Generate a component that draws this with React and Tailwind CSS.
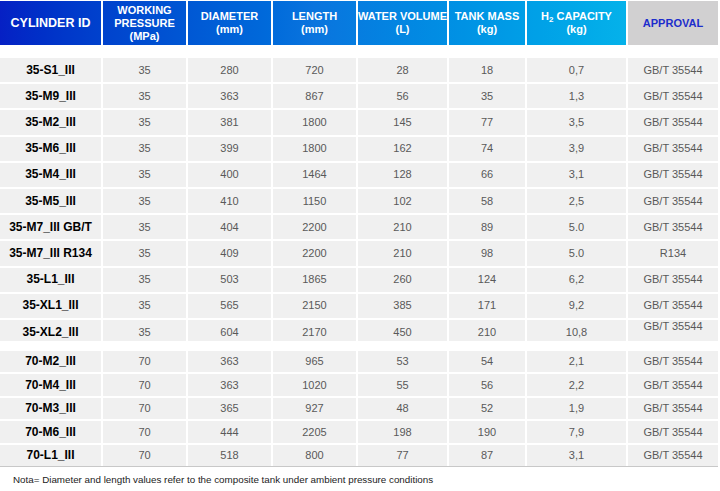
import React from 'react';

const cols = 'grid grid-cols-[103px_85px_85px_85px_91px_78px_101px_92px]';

const group35 = [
  ['35-S1_III', '35', '280', '720', '28', '18', '0,7', 'GB/T 35544'],
  ['35-M9_III', '35', '363', '867', '56', '35', '1,3', 'GB/T 35544'],
  ['35-M2_III', '35', '381', '1800', '145', '77', '3,5', 'GB/T 35544'],
  ['35-M6_III', '35', '399', '1800', '162', '74', '3,9', 'GB/T 35544'],
  ['35-M4_III', '35', '400', '1464', '128', '66', '3,1', 'GB/T 35544'],
  ['35-M5_III', '35', '410', '1150', '102', '58', '2,5', 'GB/T 35544'],
  ['35-M7_III GB/T', '35', '404', '2200', '210', '89', '5.0', 'GB/T 35544'],
  ['35-M7_III R134', '35', '409', '2200', '210', '98', '5.0', 'R134'],
  ['35-L1_III', '35', '503', '1865', '260', '124', '6,2', 'GB/T 35544'],
  ['35-XL1_III', '35', '565', '2150', '385', '171', '9,2', 'GB/T 35544'],
];

const group70 = [
  ['70-M2_III', '70', '363', '965', '53', '54', '2,1', 'GB/T 35544'],
  ['70-M4_III', '70', '363', '1020', '55', '56', '2,2', 'GB/T 35544'],
  ['70-M3_III', '70', '365', '927', '48', '52', '1,9', 'GB/T 35544'],
  ['70-M6_III', '70', '444', '2205', '198', '190', '7,9', 'GB/T 35544'],
  ['70-L1_III', '70', '518', '800', '77', '87', '3,1', 'GB/T 35544'],
];

function Row({ data, height }) {
  return (
    <div className={`${cols} ${height} border-b-2 border-white`}>
      {data.map((v, i) => (
        <div
          key={i}
          className={`flex items-center justify-center bg-[#f0f0f0] border-r-2 border-white leading-[13px] ${
            i === 0 ? 'text-[12px] font-bold text-black' : 'text-[11px] text-[#595959]'
          }`}
        >
          {v}
        </div>
      ))}
    </div>
  );
}

export default function App() {
  return (
    <div className="w-[720px] h-[491px] bg-white font-['Liberation_Sans',Arial,sans-serif] overflow-hidden">
      {/* header */}
      <div className={`${cols} h-[45px] pt-[1px]`}>
        <div className="col-span-7 grid grid-cols-[103px_85px_85px_85px_91px_78px_101px] bg-gradient-to-r from-[#0620c4] via-[#0a74de] to-[#05b2ea] text-white font-bold text-[11px] leading-[13px] text-center">
          <div className="flex items-center justify-center border-r-2 border-white text-[12.5px]">CYLINDER ID</div>
          <div className="flex items-center justify-center border-r-2 border-white">WORKING<br />PRESSURE<br />(MPa)</div>
          <div className="flex items-center justify-center border-r-2 border-white">DIAMETER<br />(mm)</div>
          <div className="flex items-center justify-center border-r-2 border-white">LENGTH<br />(mm)</div>
          <div className="flex items-center justify-center border-r-2 border-white">WATER VOLUME<br />(L)</div>
          <div className="flex items-center justify-center border-r-2 border-white">TANK MASS<br />(kg)</div>
          <div className="flex items-center justify-center border-r-2 border-white">
            <span>H<sub className="text-[8px]">2</sub> CAPACITY<br />(kg)</span>
          </div>
        </div>
        <div className="flex items-center justify-center bg-[#d1d0d1] border-r-2 border-white text-[11px] font-bold text-[#1d2dcc]">APPROVAL</div>
      </div>

      {/* 35 MPa group */}
      <div className="mt-[11px] border-t-2 border-white">
        {group35.map((r) => (
          <Row key={r[0]} data={r} height="h-[26.2px]" />
        ))}
        <div className={`${cols} h-[21px]`}>
          {['35-XL2_III', '35', '604', '2170', '450', '210', '10,8'].map((v, i) => (
            <div
              key={i}
              className={`flex justify-center pt-[6.5px] bg-[#f0f0f0] border-r-2 border-white leading-[13px] ${
                i === 0 ? 'text-[12px] font-bold text-black' : 'text-[11px] text-[#595959]'
              }`}
            >
              {v}
            </div>
          ))}
          <div className="flex justify-center bg-[#f0f0f0] border-r-2 border-white text-[11px] leading-[13px] text-[#595959]">GB/T 35544</div>
        </div>
      </div>

      {/* 70 MPa group */}
      <div className="mt-[10px]">
        {group70.map((r) => (
          <Row key={r[0]} data={r} height="h-[23.5px]" />
        ))}
        <div className="w-[718px] h-px bg-[#c8c8c8] -mt-[2px]" />
      </div>

      <p className="mt-[7px] pl-[13px] text-[9.8px] leading-[12px] text-[#222]">
        Nota= Diameter and length values refer to the composite tank under ambient pressure conditions
      </p>
    </div>
  );
}
